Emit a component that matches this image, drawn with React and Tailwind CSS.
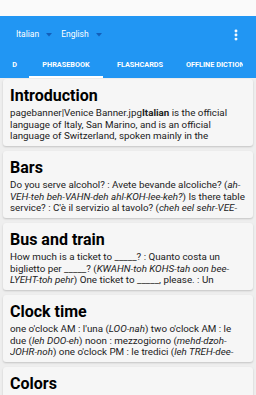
import { EllipsisVertical } from "lucide-react";

const cards = [
  {
    title: "Introduction",
    body: (
      <>
        pagebanner|Venice Banner.jpg<b className="font-bold">Italian</b> is the
        official language of Italy, San Marino, and is an official language of
        Switzerland, spoken mainly in the Ticino&nbsp;and&nbsp;Grigioni cantons.
      </>
    ),
  },
  {
    title: "Bars",
    body: (
      <>
        Do you serve alcohol? : Avete bevande alcoliche? (
        <i>ah-VEH-teh beh-VAHN-deh ahl-KOH-lee-keh?</i>) Is there table
        service? : C'è il servizio al tavolo? (
        <i>cheh eel sehr-VEE-tsyoh ahl TAH-voh-loh?</i>)
      </>
    ),
  },
  {
    title: "Bus and train",
    body: (
      <>
        How much is a ticket to _____? : Quanto costa un biglietto per _____? (
        <i>KWAHN-toh KOHS-tah oon bee-LYEHT-toh pehr</i>) One ticket to _____,
        please. : Un biglietto per _____, per favore.
      </>
    ),
  },
  {
    title: "Clock time",
    body: (
      <>
        one o'clock AM : l'una (<i>LOO-nah</i>) two o'clock AM : le due (
        <i>leh DOO-eh</i>) noon : mezzogiorno (<i>mehd-dzoh-JOHR-noh</i>) one
        o'clock PM : le tredici (<i>leh TREH-dee-chee</i>)
      </>
    ),
  },
  {
    title: "Colors",
    body: (
      <>
        black : nero (<i>NEH-roh</i>) white : bianco (<i>BYAHN-koh</i>) gray :
        grigio (<i>GREE-joh</i>)
      </>
    ),
  },
];

function Caret() {
  return (
    <svg width="6" height="4" viewBox="0 0 6 4" className="ml-[7px]">
      <path d="M0 0h6L3 3.5z" fill="#0d47a1" fillOpacity="0.7" />
    </svg>
  );
}

export default function App() {
  return (
    <div
      className="w-[256px] h-[395px] overflow-hidden bg-[#eeeeee]"
      style={{ fontFamily: "Roboto, 'Noto Sans', sans-serif" }}
    >
      {/* status bar */}
      <div className="h-[16px] bg-[#fafafa]" />

      {/* toolbar */}
      <div className="bg-[#2196f3] text-white">
        <div className="h-[37px] flex items-center pl-[16px] pr-[13px]">
          <span className="text-[8.5px]">Italian</span>
          <Caret />
          <span className="text-[8.5px] ml-[9px]">English</span>
          <Caret />
          <EllipsisVertical className="ml-auto size-[14px]" strokeWidth={3} />
        </div>

        {/* tabs */}
        <div className="h-[25px] flex text-[7.3px] font-bold whitespace-nowrap">
          <div className="w-[29px] flex items-center justify-center pb-[1px]">
            D
          </div>
          <div className="w-[74px] relative flex items-center justify-center pb-[1px]">
            PHRASEBOOK
            <div className="absolute left-0 right-0 bottom-0 h-[2px] bg-white" />
          </div>
          <div className="w-[74px] flex items-center justify-center pb-[1px]">
            FLASHCARDS
          </div>
          <div className="w-[57px] ml-[9px] overflow-hidden flex items-center pb-[1px]">
            OFFLINE DICTIONARY
          </div>
        </div>
      </div>

      {/* cards */}
      <div className="flex flex-col gap-[5px] px-[3px] pt-[1px]">
        {cards.map((c) => (
          <div
            key={c.title}
            className="bg-[#f6f6f6] rounded-[3px] shadow-[0_1px_2px_rgba(0,0,0,0.18)] px-[7px] pt-[6px] pb-[4px]"
          >
            <h2 className="text-[16px] leading-[22px] font-bold text-black">
              {c.title}
            </h2>
            <p className="text-[9.8px] leading-[11.7px] h-[35px] overflow-hidden text-[#212121]">
              {c.body}
            </p>
          </div>
        ))}
      </div>
    </div>
  );
}
